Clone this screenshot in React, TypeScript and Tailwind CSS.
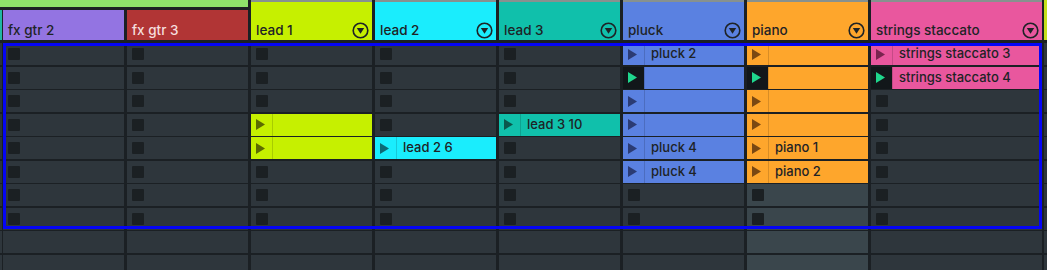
import React from "react";

type Slot = null | { name?: string; playing?: boolean };

type Track = {
  name: string;
  head: string;
  clip: string;
  headText: string;
  tri: string;
  width: string;
  gap: string;
  empty: string;
  menu: boolean;
  slots: Slot[];
};

const E: Slot = null;
const c = (name?: string, playing?: boolean): Slot => ({ name, playing });

const grouped: Track[] = [
  {
    name: "fx gtr 2",
    head: "bg-[#9374e2]",
    clip: "bg-[#9374e2]",
    headText: "text-[#1e2326]",
    tri: "#3a2a70",
    width: "w-[121px]",
    gap: "mr-[3px]",
    empty: "bg-[#2e363c]",
    menu: false,
    slots: [E, E, E, E, E, E, E, E],
  },
  {
    name: "fx gtr 3",
    head: "bg-[#b13535]",
    clip: "bg-[#b13535]",
    headText: "text-[#f5dede]",
    tri: "#5a1414",
    width: "w-[121px]",
    gap: "",
    empty: "bg-[#2e363c]",
    menu: false,
    slots: [E, E, E, E, E, E, E, E],
  },
];

const tracks: Track[] = [
  {
    name: "lead 1",
    head: "bg-[#c6f000]",
    clip: "bg-[#c6f000]",
    headText: "text-[#1e2326]",
    tri: "#5c6b00",
    width: "w-[121px]",
    gap: "mr-[3px]",
    empty: "bg-[#2e363c]",
    menu: true,
    slots: [E, E, E, c(), c(), E, E, E],
  },
  {
    name: "lead 2",
    head: "bg-[#1aedfd]",
    clip: "bg-[#1aedfd]",
    headText: "text-[#1e2326]",
    tri: "#0c6a76",
    width: "w-[121px]",
    gap: "mr-[3px]",
    empty: "bg-[#2e363c]",
    menu: true,
    slots: [E, E, E, E, c("lead 2 6"), E, E, E],
  },
  {
    name: "lead 3",
    head: "bg-[#10c0ab]",
    clip: "bg-[#10c0ab]",
    headText: "text-[#1e2326]",
    tri: "#0b574d",
    width: "w-[121px]",
    gap: "mr-[3px]",
    empty: "bg-[#2e363c]",
    menu: true,
    slots: [E, E, E, c("lead 3 10"), E, E, E, E],
  },
  {
    name: "pluck",
    head: "bg-[#5a81e1]",
    clip: "bg-[#5a81e1]",
    headText: "text-[#1e2326]",
    tri: "#2b3b74",
    width: "w-[121px]",
    gap: "mr-[3px]",
    empty: "bg-[#2e363c]",
    menu: true,
    slots: [c("pluck 2"), c(undefined, true), c(), c(), c("pluck 4"), c("pluck 4"), E, E],
  },
  {
    name: "piano",
    head: "bg-[#fea62c]",
    clip: "bg-[#fea62c]",
    headText: "text-[#1e2326]",
    tri: "#7a4812",
    width: "w-[121px]",
    gap: "mr-[3px]",
    empty: "bg-[#3a464c]",
    menu: true,
    slots: [c(), c(undefined, true), c(), c(), c("piano 1"), c("piano 2"), E, E],
  },
  {
    name: "strings staccato",
    head: "bg-[#e9579e]",
    clip: "bg-[#e9579e]",
    headText: "text-[#1e2326]",
    tri: "#7a234f",
    width: "w-[171px]",
    gap: "mr-[2px]",
    empty: "bg-[#2e363c]",
    menu: true,
    slots: [c("strings staccato 3"), c("strings staccato 4", true), E, E, E, E, E, E],
  },
];

function Play({ fill }: { fill: string }) {
  return (
    <svg width="9" height="11" viewBox="0 0 9 11">
      <polygon points="0,0 9,5.5 0,11" fill={fill} />
    </svg>
  );
}

function Menu() {
  return (
    <svg width="17" height="17" viewBox="0 0 17 17">
      <circle cx="8.5" cy="8.5" r="7.3" fill="none" stroke="#1e2326" strokeWidth="1.6" />
      <polygon points="4.8,6 12.2,6 8.5,11.8" fill="#1e2326" />
    </svg>
  );
}

function SlotCell({ t, slot }: { t: Track; slot: Slot }) {
  if (!slot) {
    return (
      <div className={`flex h-[22px] shrink-0 items-center pl-[5px] ${t.empty}`}>
        <div className="h-[12px] w-[12px] rounded-[1px] bg-[#1b2023]" />
      </div>
    );
  }
  return (
    <div className={`flex h-[22px] shrink-0 ${t.clip}`}>
      <div
        className={`flex w-[21px] shrink-0 items-center pl-[5px] ${
          slot.playing ? "bg-[#12171a]" : ""
        }`}
      >
        <Play fill={slot.playing ? "#1fd78d" : t.tri} />
      </div>
      <div className="flex flex-1 items-center truncate border-l border-black/15 pl-[6px] text-[13px] font-medium text-[#1e2326]">
        {slot.name}
      </div>
    </div>
  );
}

function Rows({ t }: { t: Track }) {
  return (
    <div className="mt-[3px] flex shrink-0 flex-col gap-[1.5px]">
      {t.slots.map((s, i) => (
        <SlotCell key={i} t={t} slot={s} />
      ))}
      <div className={`h-[22px] shrink-0 ${t.empty}`} />
      <div className={`h-[22px] shrink-0 ${t.empty}`} />
    </div>
  );
}

function Header({ t }: { t: Track }) {
  return (
    <div className={`flex h-full items-end justify-between ${t.head}`}>
      <div className="flex h-[20px] w-full items-center justify-between pl-[5px] pr-[3px]">
        <span className={`text-[13.5px] font-medium ${t.headText}`}>{t.name}</span>
        {t.menu && <Menu />}
      </div>
    </div>
  );
}

function Blank({ n }: { n: number }) {
  return (
    <div className="mt-[3px] flex shrink-0 flex-col gap-[1.5px]">
      {Array.from({ length: n }).map((_, i) => (
        <div key={i} className="h-[22px] shrink-0 bg-[#2e363c]" />
      ))}
    </div>
  );
}

export default function App() {
  return (
    <div className="relative flex h-[270px] w-[1047px] items-start overflow-hidden bg-[#1b2024] font-['Inter',sans-serif]">
      {/* group: fx gtr */}
      <div className="mr-[3px] flex shrink-0 flex-col">
        <div className="h-[7px] shrink-0 bg-[#8ee26b]" />
        <div className="mt-[3px] flex shrink-0">
          <div className="mr-[1px] w-[2px]">
            <div className="h-[30px] bg-[#1fb6a4]" />
            <Blank n={10} />
          </div>
          {grouped.map((t) => (
            <div key={t.name} className={`${t.width} ${t.gap}`}>
              <div className="h-[30px]">
                <Header t={t} />
              </div>
              <Rows t={t} />
            </div>
          ))}
        </div>
      </div>

      {tracks.map((t) => (
        <div key={t.name} className={`${t.width} ${t.gap} shrink-0`}>
          <div className="flex h-[40px] flex-col">
            <div className="h-[2px] shrink-0 bg-[#87918f]" />
            <div className="flex-1">
              <Header t={t} />
            </div>
          </div>
          <Rows t={t} />
        </div>
      ))}

      <div className="w-[3px] shrink-0">
        <div className="h-[40px] bg-[#c6e01c]" />
        <Blank n={10} />
      </div>

      {/* selection frame */}
      <div className="pointer-events-none absolute left-[3px] top-[43px] h-[186px] w-[1039px] border-[3px] border-[#0505f5]" />
    </div>
  );
}
